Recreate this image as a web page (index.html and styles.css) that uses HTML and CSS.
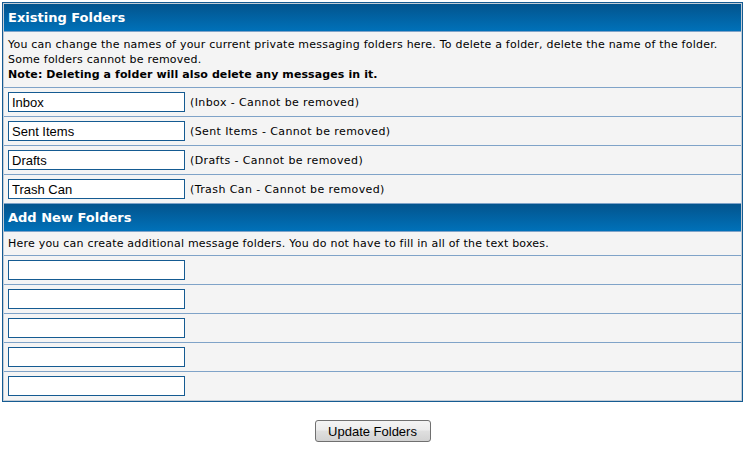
FILE: index.html
```html
<!DOCTYPE html>
<html>
<head>
<meta charset="utf-8">
<link rel="stylesheet" href="styles.css">
</head>
<body>
<div class="panel">
  <div class="head">Existing Folders</div>
  <div class="desc desc-long">You can change the names of your current private messaging folders here. To delete a folder, delete the name of the folder.<br>Some folders cannot be removed.<br><strong>Note: Deleting a folder will also delete any messages in it.</strong></div>
  <div class="row"><input class="field" type="text" value="Inbox"><span class="note">(Inbox - Cannot be removed)</span></div>
  <div class="row"><input class="field" type="text" value="Sent Items"><span class="note">(Sent Items - Cannot be removed)</span></div>
  <div class="row"><input class="field" type="text" value="Drafts"><span class="note">(Drafts - Cannot be removed)</span></div>
  <div class="row"><input class="field" type="text" value="Trash Can"><span class="note">(Trash Can - Cannot be removed)</span></div>
  <div class="head">Add New Folders</div>
  <div class="desc desc-short">Here you can create additional message folders. You do not have to fill in all of the text boxes.</div>
  <div class="row"><input class="field" type="text"></div>
  <div class="row"><input class="field" type="text"></div>
  <div class="row"><input class="field" type="text"></div>
  <div class="row"><input class="field" type="text"></div>
  <div class="row"><input class="field" type="text"></div>
</div>
<div class="actions"><button class="btn" type="button">Update Folders</button></div>
</body>
</html>
```

FILE: styles.css
```css
html, body {
  margin: 0;
  padding: 0;
  background: #ffffff;
}
body {
  padding: 2px;
  font-family: "DejaVu Sans", Verdana, sans-serif;
  font-size: 11px;
  color: #000000;
}
.panel {
  box-sizing: border-box;
  width: 741px;
  border: 1px solid #155b92;
  padding: 1px;
  background: #7fa3c8;
  box-shadow: inset 0 0 0 1px #c3ccd6;
  display: flex;
  flex-direction: column;
  gap: 1px;
}
.head {
  background: linear-gradient(#03548d, #0071b9);
  color: #ffffff;
  font-weight: bold;
  font-size: 13px;
  line-height: 19px;
  padding: 4px;
}
.desc {
  background: #f4f4f4;
  padding: 4px;
  line-height: 15px;
  letter-spacing: 0.22px;
  white-space: nowrap;
}
.desc-long {
  padding-top: 5px;
  padding-bottom: 5px;
}
.desc strong {
  font-weight: bold;
  letter-spacing: 0.1px;
}
.row {
  background: #f4f4f4;
  height: 28px;
  box-sizing: border-box;
  padding: 4px;
  display: flex;
  align-items: center;
  gap: 5px;
}
.field {
  box-sizing: border-box;
  width: 177px;
  height: 20px;
  margin: 0;
  border: 1px solid #155b92;
  background: #ffffff;
  padding: 0 3px;
  font-family: "Liberation Sans", Arial, sans-serif;
  font-size: 13px;
  color: #000000;
  outline: none;
}
.note {
  font-size: 11px;
  letter-spacing: 0.4px;
  color: #000000;
}
.actions {
  width: 741px;
  display: flex;
  justify-content: center;
  padding-top: 18px;
}
.btn {
  box-sizing: border-box;
  width: 116px;
  height: 22px;
  margin: 0;
  padding: 0;
  border: 1px solid #707070;
  border-radius: 3px;
  background: linear-gradient(#f4f4f4 0%, #ececec 45%, #dfdfdf 50%, #d2d2d2 100%);
  font-family: "Liberation Sans", Arial, sans-serif;
  font-size: 13px;
  color: #000000;
}
```
